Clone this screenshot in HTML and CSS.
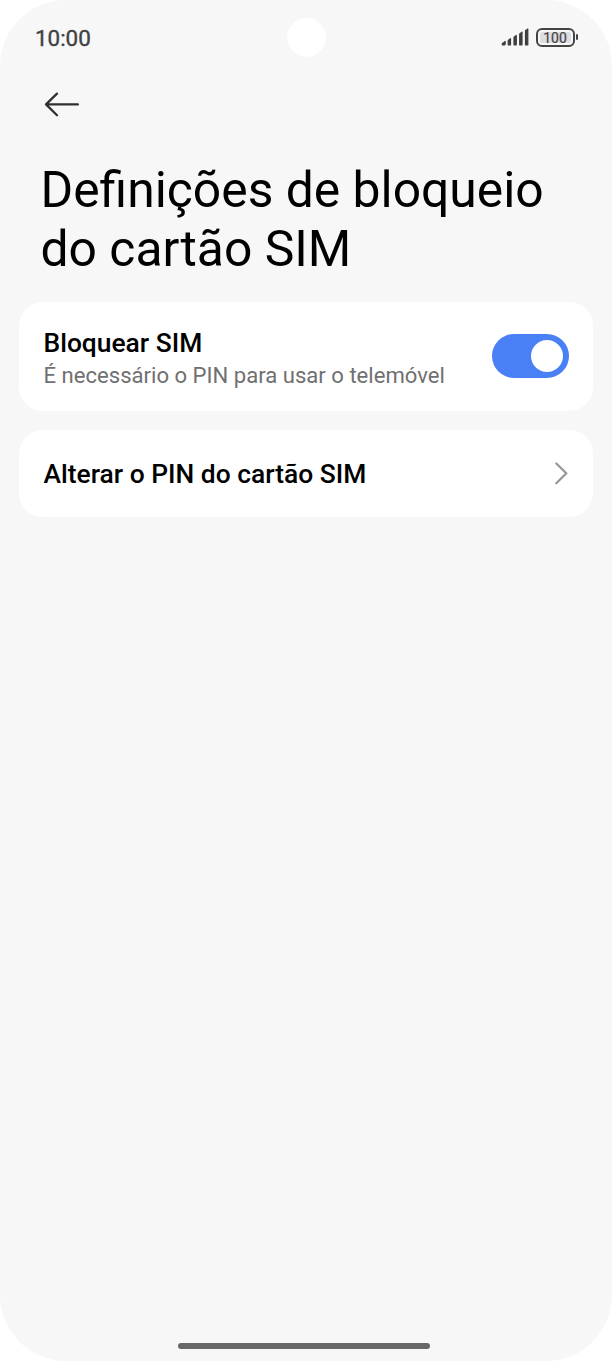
FILE: index.html
```html
<!DOCTYPE html>
<html lang="pt">
<head>
<meta charset="utf-8">
<title>Definições de bloqueio do cartão SIM</title>
<link rel="stylesheet" href="styles.css">
</head>
<body>
<div class="screen">
  <header class="status">
    <span class="time">10:00</span>
    <span class="camera"></span>
    <span class="indicators">
      <svg class="signal" width="28" height="20" viewBox="0 0 28 20">
        <path d="M1.3 17.8V16.8L4.2 14.5V17L3.6 17.8ZM7.2 17.8V13.4L9.5 11.6V17.8ZM13 17.8V10.2L15.3 8.4V17.8ZM18.7 17.8V7L21 5.2V17.8ZM24.5 17.8V3.8L26.8 2V17.8Z"/>
      </svg>
      <span class="battery"><span class="level">100</span></span>
      <span class="battery-tip"></span>
    </span>
  </header>
  <nav class="toolbar">
    <svg width="36" height="26" viewBox="0 0 36 26">
      <path class="arrow" d="M33.9 13.4H2M13 2.6L2 13.4L13 24.2"/>
    </svg>
  </nav>
  <h1 class="title">Definições de bloqueio<br>do cartão SIM</h1>
  <main class="cards">
    <section class="card card-lock">
      <div class="text">
        <div class="label">Bloquear SIM</div>
        <div class="hint">É necessário o PIN para usar o telemóvel</div>
      </div>
      <span class="toggle"><span class="knob"></span></span>
    </section>
    <section class="card card-pin">
      <div class="label">Alterar o PIN do cartão SIM</div>
      <svg class="chevron" width="14" height="24" viewBox="0 0 14 24">
        <path d="M1.3 1.5L11.3 11.3L1.3 21.2"/>
      </svg>
    </section>
  </main>
  <footer class="home"><span class="bar"></span></footer>
</div>
</body>
</html>
```
FILE: styles.css
```css
* { box-sizing: border-box; }
body { margin: 0; background: #fff; font-family: Roboto, sans-serif; }
.screen {
  width: 612px;
  height: 1361px;
  display: flex;
  flex-direction: column;
  background: #f7f7f7;
  border-radius: 66px;
  overflow: hidden;
}
.status {
  height: 74px;
  padding: 0 34.5px 0 35px;
  display: grid;
  grid-template-columns: 1fr 39px 1fr;
  align-items: center;
  flex: none;
}
.time {
  padding-top: 1px;
  font-size: 22.4px;
  line-height: 26px;
  font-weight: 400;
  -webkit-text-stroke: 0.4px #424242;
  color: #424242;
}
.camera { width: 39px; height: 39px; border-radius: 50%; background: #fff; }
.indicators { display: flex; align-items: center; justify-content: flex-end; }
.signal { fill: #3e3e3e; stroke: #3e3e3e; stroke-width: 1.2; stroke-linejoin: round; margin-right: 7px; }
.battery {
  width: 39px;
  height: 19px;
  padding: 2px;
  border: 2px solid #444;
  border-radius: 6px;
  display: flex;
}
.level {
  flex: 1;
  background: #dedde1;
  border-radius: 2px;
  font-size: 14px;
  line-height: 12px;
  font-weight: 400;
  -webkit-text-stroke: 0.2px #444;
  text-align: center;
  color: #444;
}
.battery-tip { width: 2px; height: 6px; margin-left: 1px; border-radius: 1px; background: #444; }
.toolbar { height: 60px; padding: 17px 0 0 44px; flex: none; }
.toolbar svg { display: block; }
.arrow { fill: none; stroke: #303030; stroke-width: 2.3; stroke-linecap: round; stroke-linejoin: round; }
.title { margin: 27px 0 0 40.5px; font-size: 49.8px; line-height: 58.6px; font-weight: 400; color: #000; }
.cards { margin: 24px 19px 0; display: flex; flex-direction: column; gap: 19.5px; }
.card {
  display: flex;
  align-items: center;
  justify-content: space-between;
  padding: 0 24px 0 24.5px;
  background: #fff;
  border-radius: 24px;
}
.card-lock { height: 108.5px; }
.card-pin { height: 87px; }
.label { font-size: 26.4px; line-height: 32px; font-weight: 500; color: #000; }
.hint { font-size: 22.1px; line-height: 32px; color: #707070; }
.text { padding-top: 6px; }
.toggle {
  width: 77px;
  height: 44px;
  padding: 6px;
  border-radius: 22px;
  background: #4a80f5;
  display: flex;
  justify-content: flex-end;
}
.knob { width: 32px; height: 32px; border-radius: 50%; background: #fff; }
.chevron { fill: none; stroke: #969696; stroke-width: 2.2; stroke-linecap: round; stroke-linejoin: round; }
.home { margin-top: auto; padding-bottom: 12px; display: flex; justify-content: center; }
.bar { width: 252px; height: 6px; margin-right: 4px; border-radius: 3px; background: #686868; }
```
